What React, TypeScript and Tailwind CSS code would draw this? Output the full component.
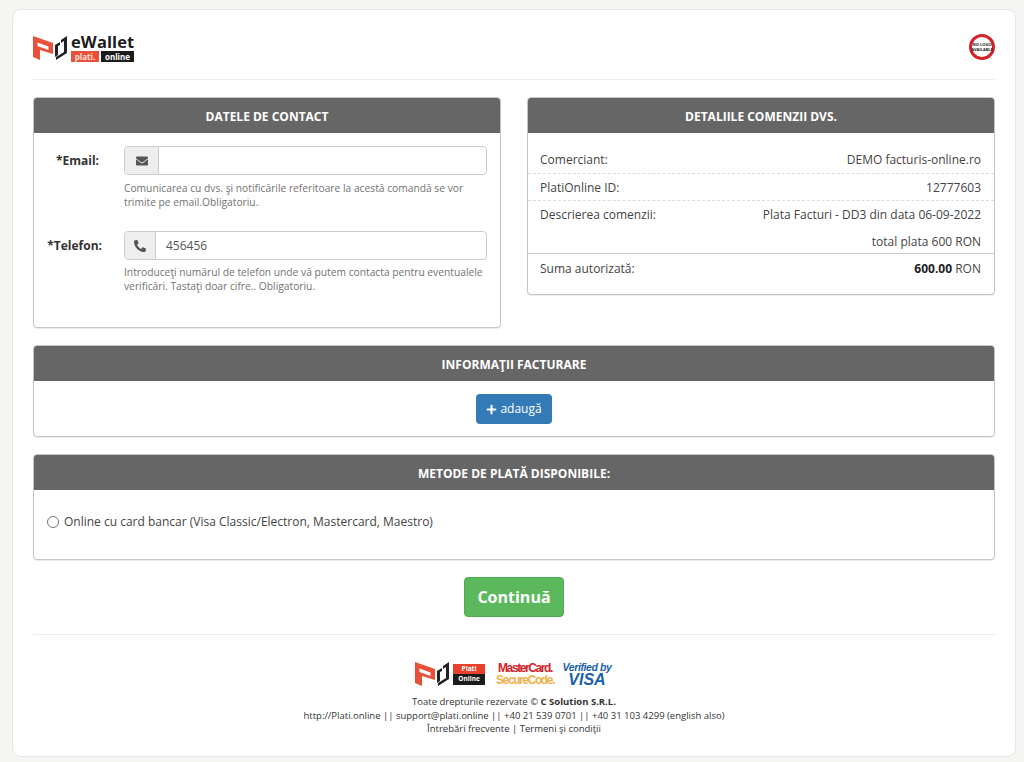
import React from 'react';
import { FaEnvelope, FaPhone, FaPlus } from 'react-icons/fa';

const LogoMark: React.FC = () => (
  <svg width="35" height="25" viewBox="0 0 35 25" className="shrink-0">
    <path d="M0 0 L20 7 V18 L7 14 V24 L0 21 Z M4.5 6.5 V10 L15.5 14 V10.5 Z" fill="#e8503a" fillRule="evenodd" />
    <path d="M22 9 L27 6 V9 L25 10 V19 L22 21 Z" fill="#222" />
    <path d="M28 4 L34 0 V17 L23 24 V21 L31 16 V5 L28 7 Z" fill="#222" />
  </svg>
);

const EWalletLogo: React.FC = () => (
  <div className="flex items-end">
    <LogoMark />
    <div className="ml-[3px] flex flex-col w-[63px] mb-[-1px]">
      <span className="text-[16.5px] leading-[16px] font-bold text-[#1c1c1c] tracking-[0.1px] whitespace-nowrap">eWallet</span>
      <div className="flex justify-between h-[11px] mt-[1px] text-[8px] leading-[11px] font-bold text-center">
        <span className="w-[28px] bg-[#e8503a] text-[#fbe0d9]">plati.</span>
        <span className="w-[33px] bg-[#1c1c1c] text-white">online</span>
      </div>
    </div>
  </div>
);

const NoLogo: React.FC = () => (
  <div className="w-[26px] h-[26px] rounded-full border-[3px] border-[#d2232a] bg-white flex flex-col items-center justify-center text-[4px] leading-[5px] font-bold text-[#222]">
    <span className="whitespace-nowrap">NO LOGO</span>
    <span className="whitespace-nowrap">AVAILABLE</span>
  </div>
);

const Panel: React.FC<{ title: string; className?: string; children: React.ReactNode }> = ({ title, className, children }) => (
  <div className={`border border-[#c4c4c4] rounded-[4px] bg-white shadow-[0_1px_1px_rgba(0,0,0,0.08)] overflow-hidden ${className ?? ''}`}>
    <div className="bg-[#666666] text-white font-bold text-[12px] h-[35px] leading-[37px] text-center">{title}</div>
    {children}
  </div>
);

const Field: React.FC<{
  label: string;
  labelClass?: string;
  helpClass: string;
  icon: React.ReactNode;
  addonWidth: string;
  value?: string;
  help: string[];
}> = ({ label, labelClass, helpClass, icon, addonWidth, value, help }) => (
  <div className="flex">
    <div className={`w-[68px] shrink-0 text-right font-bold text-[12px] text-[#333] pt-[6px] leading-[17px] whitespace-nowrap ${labelClass ?? ''}`}>{label}</div>
    <div className="ml-[22px] flex-1">
      <div className="flex h-[29px] border border-[#ccc] rounded-[4px] overflow-hidden">
        <div className={`${addonWidth} bg-[#eeeeee] border-r border-[#ccc] flex items-center justify-center text-[#555] text-[12px]`}>{icon}</div>
        <div className="flex-1 pl-[10px] text-[12px] leading-[27px] text-[#555]">{value}</div>
      </div>
      <div className={`${helpClass} text-[10.25px] leading-[14px] text-[#737373]`}>
        {help.map((line) => (
          <div key={line} className="whitespace-nowrap">{line}</div>
        ))}
      </div>
    </div>
  </div>
);

const Row: React.FC<{ label: string; value: React.ReactNode; className?: string }> = ({ label, value, className }) => (
  <div className={`flex justify-between pl-[12px] pr-[13px] h-[27px] text-[#444] ${className ?? 'leading-[27px]'}`}>
    <span>{label}</span>
    <span>{value}</span>
  </div>
);

const App: React.FC = () => {
  return (
    <div className="min-h-[762px] bg-[#f5f5f3] pt-[9px] pl-[12px] pr-[8px] font-['Open_Sans',sans-serif] text-[12px]">
      <div className="h-[748px] bg-white border border-[#e6e6e2] rounded-[9px] px-[20px]">
        {/* Header */}
        <div className="flex items-center justify-between h-[70px] border-b border-[#eeeeee] pt-[5px]">
          <EWalletLogo />
          <NoLogo />
        </div>

        <div className="flex justify-between items-start mt-[17px]">
          <Panel title="DATELE DE CONTACT" className="w-[468px] h-[231px]">
            <div className="pt-[13px] pr-[13px] flex flex-col gap-[22px]">
              <Field
                label="*Email:"
                labelClass="pr-[3px]"
                helpClass="mt-[6px]"
                icon={<FaEnvelope />}
                addonWidth="w-[34px]"
                help={['Comunicarea cu dvs. şi notificările referitoare la acestă comandă se vor', 'trimite pe email.Obligatoriu.']}
              />
              <Field
                label="*Telefon:"
                helpClass="mt-[5px]"
                icon={<FaPhone className="scale-x-[-1]" />}
                addonWidth="w-[31px]"
                value="456456"
                help={['Introduceţi numărul de telefon unde vă putem contacta pentru eventualele', 'verificări. Tastaţi doar cifre.. Obligatoriu.']}
              />
            </div>
          </Panel>

          <Panel title="DETALIILE COMENZII DVS." className="w-[468px] h-[198px]">
            <div className="pt-[14px]">
              <Row label="Comerciant:" value="DEMO facturis-online.ro" className="leading-[26px] border-b border-dashed border-[#dddddd]" />
              <Row label="PlatiOnline ID:" value="12777603" className="leading-[28px] border-b border-dashed border-[#dddddd]" />
              <Row label="Descrierea comenzii:" value="Plata Facturi - DD3 din data 06-09-2022" />
              <div className="h-[26px] px-[13px] text-right leading-[28px] text-[#444] border-b border-[#cccccc]">total plata 600 RON</div>
              <Row label="Suma autorizată:" value={<><b className="text-[#222]">600.00</b> RON</>} className="leading-[30px]" />
            </div>
          </Panel>
        </div>

        <Panel title="INFORMAŢII FACTURARE" className="mt-[17px] h-[92px]">
          <div className="flex justify-center pt-[13px]">
            <button className="w-[76px] h-[30px] bg-[#337ab7] rounded-[4px] text-white text-[12px] flex items-center justify-center gap-[3px]">
              <FaPlus className="text-[11px]" />
              adaugă
            </button>
          </div>
        </Panel>

        <Panel title="METODE DE PLATĂ DISPONIBILE:" className="mt-[17px] h-[106px]">
          <div className="flex items-center pl-[13px] pt-[23px] text-[#444] text-[12px] leading-[17px]">
            <span className="w-[12px] h-[12px] rounded-full border-[1.5px] border-[#777] mr-[5px]" />
            Online cu card bancar (Visa Classic/Electron, Mastercard, Maestro)
          </div>
        </Panel>

        <div className="flex justify-center mt-[17px]">
          <button className="w-[100px] h-[40px] bg-[#5cb85c] border border-[#4cae4c] rounded-[4px] text-white text-[16px] font-bold">Continuă</button>
        </div>

        <div className="mt-[17px] border-t border-[#eeeeee]" />

        {/* Footer */}
        <div className="flex flex-col items-center pt-[25px] text-[9.5px] leading-[13.5px] text-[#333]">
          <div className="flex items-center h-[28px] ml-[-1px]">
            <LogoMark />
            <div className="ml-[3px] w-[32px] h-[21px] flex flex-col text-white font-bold text-[6.5px] leading-[10px] text-center">
              <span className="h-[10px] bg-[#e8402a]">Plati</span>
              <span className="h-[11px] bg-[#1c1c1c]">Online</span>
            </div>
            <div className="ml-[11px] w-[58px] flex flex-col items-center font-['Liberation_Sans',sans-serif] font-bold text-[12px] leading-[12px] tracking-[-1.4px] whitespace-nowrap">
              <span className="text-[#d2232a]">MasterCard.</span>
              <span className="text-[#f2b04b]">SecureCode.</span>
            </div>
            <div className="ml-[8px] w-[50px] flex flex-col items-center font-['Liberation_Sans',sans-serif] font-bold italic text-[#1a5fa8] whitespace-nowrap">
              <span className="text-[10.5px] leading-[12px] tracking-[-0.4px]">Verified by</span>
              <span className="text-[16px] leading-[14px]">VISA</span>
            </div>
          </div>
          <div className="mt-[7px]">Toate drepturile rezervate © <b>C Solution S.R.L.</b></div>
          <div>http://Plati.online || support@plati.online || +40 21 539 0701 || +40 31 103 4299 (english also)</div>
          <div>Întrebări frecvente | Termeni şi condiţii</div>
        </div>
      </div>
    </div>
  );
};

export default App;
